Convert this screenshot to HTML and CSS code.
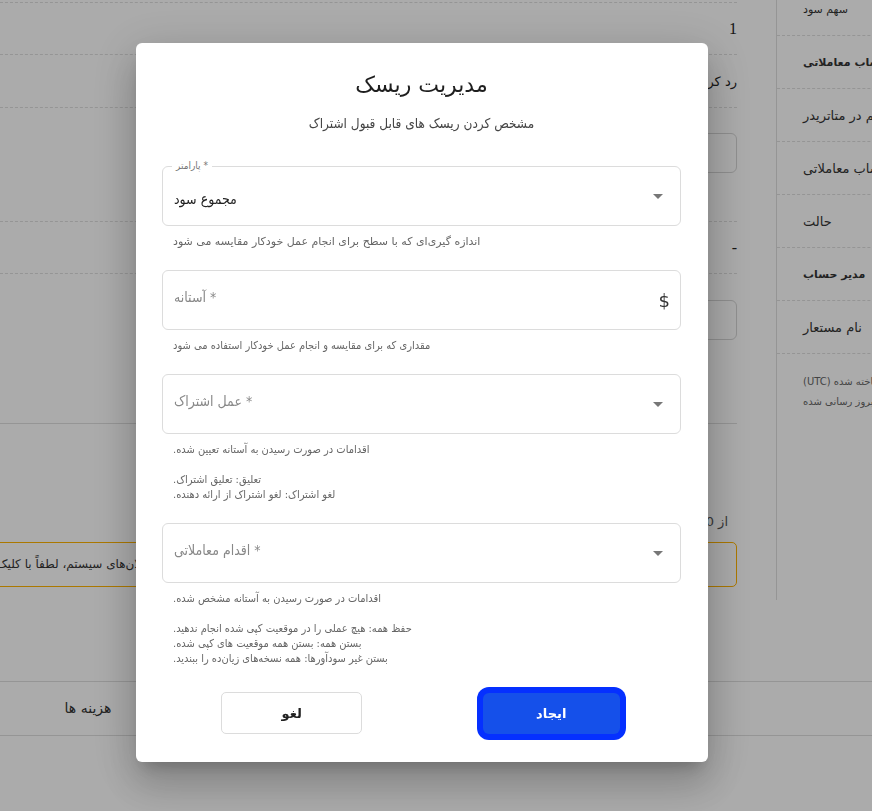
FILE: index.html
```html
<!DOCTYPE html>
<html lang="fa">
<head>
<meta charset="utf-8">
<title>مدیریت ریسک</title>
<link rel="stylesheet" href="styles.css">
</head>
<body>
<div class="page">
  <div class="top">
    <div class="main">
      <div class="row row-1"><span class="num">1</span></div>
      <div class="row row-2"><span class="val">رد کردن</span></div>
      <div class="row row-3"><div class="box"></div></div>
      <div class="row row-4"><span class="num">-</span></div>
      <div class="row row-5"><div class="box"></div></div>
      <div class="pager">از 0 تا 0 مورد</div>
      <div class="alert"><div class="alert-text">اعلان‌های سیستم، لطفاً با کلیک روی دکمه زیر اقدام کنید</div></div>
    </div>
    <div class="gutter"></div>
    <div class="side">
      <div class="srow small">سهم سود</div>
      <div class="srow small bold">شماره حساب معاملاتی</div>
      <div class="srow">ورود به سیستم در متاتریدر</div>
      <div class="srow">نوع حساب معاملاتی</div>
      <div class="srow">حالت</div>
      <div class="srow small bold">مدیر حساب</div>
      <div class="srow">نام مستعار</div>
      <div class="stamp first">ساخته شده (UTC)</div>
      <div class="stamp">بروز رسانی شده</div>
    </div>
  </div>
  <div class="tabs">
    <div class="tab">هزینه ها</div>
  </div>
</div>

<div class="overlay"></div>

<div class="modal" role="dialog">
  <h2 class="title">مدیریت ریسک</h2>
  <p class="subtitle">مشخص کردن ریسک های قابل قبول اشتراک</p>

  <div class="form">
    <div class="field">
      <span class="float-label">پارامتر *</span>
      <span class="value">مجموع سود</span>
      <svg class="arrow" viewBox="0 0 24 24" width="24" height="24"><path d="M7 10l5 5 5-5z"/></svg>
    </div>
    <div class="helper helper-wide">اندازه گیری‌ای که با سطح برای انجام عمل خودکار مقایسه می شود</div>

    <div class="field">
      <span class="placeholder">آستانه *</span>
      <span class="dollar">$</span>
    </div>
    <div class="helper">مقداری که برای مقایسه و انجام عمل خودکار استفاده می شود</div>

    <div class="field">
      <span class="placeholder">عمل اشتراک *</span>
      <svg class="arrow" viewBox="0 0 24 24" width="24" height="24"><path d="M7 10l5 5 5-5z"/></svg>
    </div>
    <div class="helper">اقدامات در صورت رسیدن به آستانه تعیین شده.<br><br>تعلیق: تعلیق اشتراک.<br>لغو اشتراک: لغو اشتراک از ارائه دهنده.</div>

    <div class="field">
      <span class="placeholder">اقدام معاملاتی *</span>
      <svg class="arrow" viewBox="0 0 24 24" width="24" height="24"><path d="M7 10l5 5 5-5z"/></svg>
    </div>
    <div class="helper">اقدامات در صورت رسیدن به آستانه مشخص شده.<br><br>حفظ همه: هیچ عملی را در موقعیت کپی شده انجام ندهید.<br>بستن همه: بستن همه موقعیت های کپی شده.<br>بستن غیر سودآورها: همه نسخه‌های زیان‌ده را ببندید.</div>
  </div>

  <div class="actions">
    <button class="btn btn-cancel">لغو</button>
    <button class="btn btn-create">ایجاد</button>
  </div>
</div>
</body>
</html>
```
FILE: styles.css
```css
* { box-sizing: border-box; }

html, body {
  margin: 0;
  padding: 0;
  background: #fff;
  overflow: hidden;
}

body {
  font-family: "DejaVu Sans", sans-serif;
  color: #222;
}

.page {
  width: 872px;
  height: 811px;
  overflow: hidden;
}

/* background page */
.top {
  display: flex;
  height: 600px;
}

.main {
  flex: none;
  width: 757px;
  margin-left: -20px;
  padding-top: 2px;
}

.row {
  border-top: 1px dashed #dedede;
  display: flex;
  flex-direction: column;
  align-items: flex-end;
  font-size: 13px;
}

.row-1 { height: 52px; justify-content: center; }
.row-2 { height: 53px; justify-content: center; }
.row-3 { height: 114px; padding-top: 25px; }
.row-4 { height: 52px; justify-content: center; }
.row-5 { height: 151px; padding-top: 26px; border-bottom: 1px solid #dedede; }

.num {
  font-family: "Liberation Serif", serif;
  font-size: 16px;
}

.val { direction: rtl; }

.box {
  width: 320px;
  height: 40px;
  border: 1px solid #d6d6d6;
  border-radius: 6px;
}

.pager {
  margin-top: 88px;
  direction: rtl;
  text-align: right;
  padding-right: 9px;
  font-size: 13px;
  line-height: 20px;
  color: #555;
}

.alert {
  margin-top: 10px;
  height: 45px;
  border: 1px solid #ffb300;
  border-radius: 5px;
  display: flex;
  align-items: center;
  overflow: hidden;
}

.alert-text {
  flex: none;
  width: 171px;
  direction: rtl;
  white-space: nowrap;
  font-size: 12px;
  line-height: 18px;
  padding-bottom: 1px;
  color: #333;
}

.gutter {
  flex: none;
  width: 39px;
}

.side {
  flex: none;
  width: 240px;
  border-left: 1px solid #dedede;
  overflow: hidden;
}

.srow {
  height: 53px;
  border-bottom: 1px dashed #dedede;
  padding-left: 26px;
  display: flex;
  align-items: center;
  white-space: nowrap;
  font-size: 13px;
  color: #333;
}

.srow:first-child {
  margin-top: -17px;
}

.srow.small { font-size: 11px; }
.srow.bold { font-weight: bold; }

.stamp {
  padding-left: 26px;
  font-size: 10px;
  line-height: 20px;
  color: #666;
  white-space: nowrap;
  direction: rtl;
  text-align: left;
  width: 150px;
}

.stamp.first { margin-top: 18px; }

.tabs {
  margin-top: 81px;
  height: 55px;
  border-top: 1px solid #dedede;
  border-bottom: 1px solid #dedede;
  display: flex;
}

.tab {
  width: 176px;
  text-align: center;
  line-height: 52px;
  font-size: 14px;
  color: #333;
  direction: rtl;
}

/* overlay + modal */
.overlay {
  position: fixed;
  inset: 0;
  background: rgba(0, 0, 0, 0.33);
}

.modal {
  position: fixed;
  left: 136px;
  top: 43px;
  width: 572px;
  height: 719px;
  background: #fff;
  border-radius: 6px;
  padding: 27px 27px 28px 26px;
  box-shadow: 0 11px 15px -7px rgba(0,0,0,0.2), 0 24px 38px 3px rgba(0,0,0,0.14), 0 9px 46px 8px rgba(0,0,0,0.12);
  font-family: "DejaVu Sans Condensed", "DejaVu Sans", sans-serif;
}

.title {
  margin: 0;
  text-align: center;
  font-family: "DejaVu Sans", sans-serif;
  font-size: 22px;
  line-height: 30px;
  font-weight: normal;
  color: #1e1e1e;
}

.subtitle {
  margin: 14px 0 0;
  text-align: center;
  font-size: 13.5px;
  line-height: 18px;
  color: #444;
}

.form {
  margin-top: 34px;
}

.field {
  position: relative;
  height: 60px;
  border: 1px solid #dcdcdc;
  border-radius: 6px;
  display: flex;
  align-items: center;
  padding: 0 10px 0 11px;
}

.float-label {
  position: absolute;
  top: -8px;
  left: 9px;
  padding: 0 4px;
  background: #fff;
  font-size: 10px;
  line-height: 14px;
  color: #777;
}

.value {
  flex: 1;
  font-size: 14px;
  color: #222;
  padding-top: 6px;
}

.placeholder {
  flex: 1;
  font-size: 14px;
  color: #888;
  margin-top: -6px;
}

.arrow {
  flex: none;
  fill: #777;
}

.dollar {
  flex: none;
  font-family: "DejaVu Sans", sans-serif;
  font-size: 18px;
  color: #333;
}

.helper {
  margin: 8px 0 21px;
  padding-left: 11px;
  font-size: 11px;
  line-height: 15px;
  color: #666;
  direction: rtl;
  text-align: left;
}

.helper-wide {
  font-family: "DejaVu Sans", sans-serif;
}

.helper:last-child {
  margin-bottom: 0;
}

.actions {
  margin-top: 26px;
  display: grid;
  grid-template-columns: 1fr 1fr;
  align-items: center;
}

.btn {
  justify-self: center;
  font-family: "DejaVu Sans", sans-serif;
  font-size: 13px;
  font-weight: bold;
  cursor: pointer;
}

.btn-cancel {
  width: 141px;
  height: 42px;
  background: #fff;
  color: #222;
  border: 1px solid #dcdcdc;
  border-radius: 5px;
}

.btn-create {
  width: 137px;
  height: 41px;
  background: #1550ea;
  color: #fff;
  border: none;
  border-radius: 6px;
  box-shadow: 0 0 0 6px #0530ff;
}
```
